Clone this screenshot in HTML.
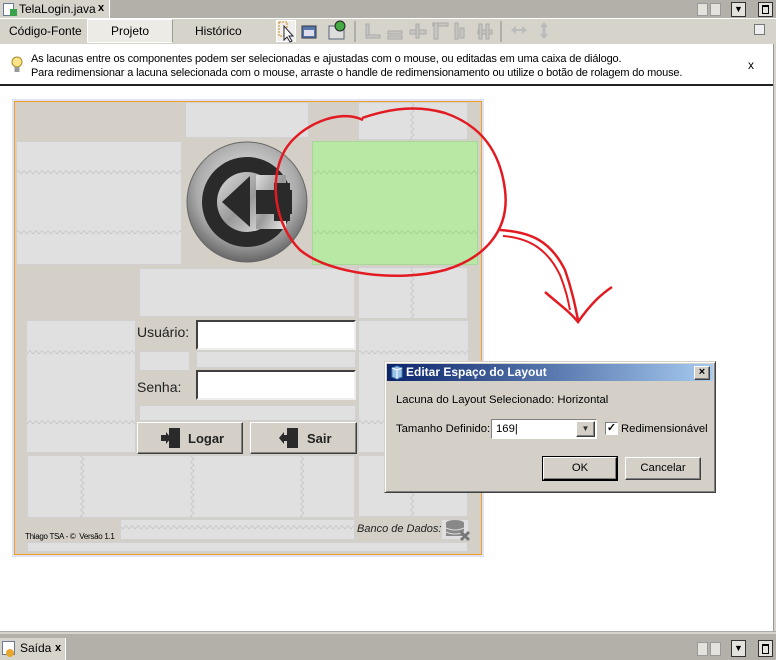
<!DOCTYPE html>
<html><head><meta charset="utf-8"><style>
*{margin:0;padding:0;box-sizing:border-box}
body{width:776px;height:660px;position:relative;overflow:hidden;background:#fff;font-family:"Liberation Sans",sans-serif;font-size:11px;color:#000}
.a{position:absolute}
.g{position:absolute;background:#e0e0e0;border:1px solid #d0d0d0}
.btn{position:absolute;background:#d4d0c8;border:1px solid;border-color:#fff #404040 #404040 #fff;box-shadow:inset -1px -1px 0 #808080}
.d{font-family:"Liberation Sans",sans-serif;font-size:11.3px}
</style></head><body>
<div class="a" style="left:0;top:0;width:776px;height:18px;background:#b3b0a9"></div>
<div class="a" style="left:0;top:0;width:110px;height:18px;background:#d6d3cb;border-right:1px solid #fff"></div>
<div class="a" style="left:3px;top:3px;width:11px;height:13px;background:#fff;border:1px solid #6a7a95"></div>
<div class="a" style="left:10px;top:9px;width:7px;height:7px;background:#3aa14b"></div>
<div class="a" style="left:19px;top:2px;font-size:12px">TelaLogin.java</div>
<div class="a" style="left:98px;top:2px;font-size:11px;font-weight:bold">x</div>
<div class="a" style="left:697px;top:3px;width:11px;height:13px;background:#e4e2dc;border:1px solid #999"></div>
<div class="a" style="left:710px;top:3px;width:11px;height:13px;background:#e4e2dc;border:1px solid #999"></div>
<div class="a" style="left:731px;top:2px;width:15px;height:15px;background:#e4e2dc;border:1px solid #333;font-size:9px;text-align:center;line-height:13px">▼</div>
<div class="a" style="left:758px;top:2px;width:15px;height:15px;background:#e4e2dc;border:1px solid #333"><div class="a" style="left:3px;top:2px;width:7px;height:9px;border:1px solid #000;border-top-width:2px"></div></div>
<div class="a" style="left:0;top:18px;width:776px;height:26px;background:#d6d3cb;border-top:1px solid #fff"></div>
<div class="a" style="left:9px;top:24px;font-size:12px">Código-Fonte</div>
<div class="a" style="left:87px;top:19px;width:86px;height:24px;background:#ecebe6;border:1px solid #fff;border-right-color:#999"></div>
<div class="a" style="left:111px;top:24px;font-size:12px">Projeto</div>
<div class="a" style="left:195px;top:24px;font-size:12px">Histórico</div>
<div class="a" style="left:276px;top:20px;width:20px;height:22px;background:#f0efec;border:1px solid #fff"></div>
<svg class="a" style="left:270px;top:18px" width="290" height="26">
<rect x="9" y="4" width="8" height="14" fill="none" stroke="#c88a1a" stroke-dasharray="2 1"/>
<path d="M14 8 L14 22 L17 19 L20 24 L22 23 L19 18 L23 18 Z" fill="#fff" stroke="#223"/>
<rect x="32" y="8" width="14" height="12" fill="#5577aa" stroke="#334"/><rect x="34" y="12" width="10" height="6" fill="#dde"/>
<rect x="59" y="8" width="15" height="13" fill="#ddd" stroke="#567"/><circle cx="70" cy="8" r="5" fill="#4a4" stroke="#222"/>
<line x1="85" y1="3" x2="85" y2="24" stroke="#888"/>
<g fill="#c8c6c0" stroke="#aaa"><rect x="96" y="6" width="3" height="14"/><rect x="96" y="17" width="14" height="3"/><rect x="118" y="13" width="14" height="3"/><rect x="118" y="18" width="14" height="3"/><rect x="140" y="12" width="16" height="4"/><rect x="146" y="6" width="3" height="14"/><rect x="163" y="5" width="15" height="3"/><rect x="164" y="5" width="4" height="16"/><rect x="185" y="5" width="3" height="16"/><rect x="190" y="10" width="4" height="10"/><rect x="208" y="12" width="14" height="4"/><rect x="209" y="6" width="3" height="15"/><rect x="216" y="6" width="3" height="15"/></g>
<line x1="231" y1="3" x2="231" y2="24" stroke="#888"/>
<path d="M241 12 L246 8 L246 11 L252 11 L252 8 L257 12 L252 16 L252 13 L246 13 L246 16 Z" fill="#bbb"/>
<path d="M274 4 L278 9 L275.5 9 L275.5 16 L278 16 L274 21 L270 16 L272.5 16 L272.5 9 L270 9 Z" fill="#bbb"/>
</svg>
<div class="a" style="left:754px;top:24px;width:11px;height:11px;border:1px solid #777;background:#eee"></div>
<div class="a" style="left:0;top:44px;width:776px;height:42px;background:#fff;border-bottom:2px solid #222"></div>
<svg class="a" style="left:10px;top:55px" width="14" height="20"><circle cx="7" cy="7" r="5" fill="#ffe38a" stroke="#a88a2a"/><rect x="4.5" y="12" width="5" height="5" fill="#999"/></svg>
<div class="a" style="left:31px;top:52px;font-size:11px;line-height:14px;letter-spacing:-0.15px;white-space:nowrap">As lacunas entre os componentes podem ser selecionadas e ajustadas com o mouse, ou editadas em uma caixa de diálogo.<br>Para redimensionar a lacuna selecionada com o mouse, arraste o handle de redimensionamento ou utilize o botão de rolagem do mouse.</div>
<div class="a" style="left:748px;top:58px;font-size:12px">x</div>
<div class="a" style="left:773px;top:44px;width:3px;height:590px;background:#d6d3cb;border-left:1px solid #999"></div>
<div class="a" style="left:12px;top:99px;width:472px;height:458px;border:2px solid #e1e1f7"></div>
<div class="a" style="left:14px;top:101px;width:468px;height:454px;border:1px solid #f0a020;background:#d4d0c8"></div>
<div class="g" style="left:185px;top:102px;width:124px;height:36px"></div>
<div class="g" style="left:358px;top:102px;width:110px;height:38px"></div>
<div class="g" style="left:16px;top:141px;width:166px;height:124px"></div>
<div class="a" style="left:312px;top:141px;width:166px;height:124px;background:#b8e8a4;border:1px solid #a8d898"></div>
<div class="g" style="left:358px;top:267px;width:110px;height:52px"></div>
<div class="g" style="left:139px;top:268px;width:216px;height:49px"></div>
<div class="g" style="left:26px;top:320px;width:110px;height:133px"></div>
<div class="g" style="left:358px;top:320px;width:111px;height:133px"></div>
<div class="g" style="left:139px;top:351px;width:51px;height:20px"></div>
<div class="g" style="left:196px;top:351px;width:160px;height:17px"></div>
<div class="g" style="left:139px;top:405px;width:217px;height:16px"></div>
<div class="g" style="left:27px;top:455px;width:328px;height:63px"></div>
<div class="g" style="left:358px;top:455px;width:110px;height:62px"></div>
<div class="g" style="left:120px;top:519px;width:235px;height:21px"></div>
<div class="g" style="left:27px;top:542px;width:441px;height:10px"></div>
<div class="g" style="left:441px;top:519px;width:28px;height:21px"></div>
<svg class="a" style="left:186px;top:141px" width="122" height="122">
<defs><radialGradient id="m" cx="50%" cy="40%" r="60%"><stop offset="0" stop-color="#f4f4f4"/><stop offset=".7" stop-color="#aaa"/><stop offset="1" stop-color="#666"/></radialGradient><linearGradient id="in" x1="0" y1="0" x2="1" y2="1"><stop offset="0" stop-color="#ddd"/><stop offset=".5" stop-color="#999"/><stop offset="1" stop-color="#eee"/></linearGradient></defs>
<circle cx="61" cy="61" r="60" fill="url(#m)" stroke="#666"/>
<circle cx="61" cy="61" r="45" fill="#2a2a2a"/>
<circle cx="61" cy="61" r="30" fill="url(#in)"/>
<rect x="70" y="34" width="30" height="54" fill="url(#in)"/>
<rect x="70" y="49" width="36" height="24" fill="#2a2a2a"/>
<path d="M36 61 L64 35 L64 86 Z" fill="#2a2a2a"/>
<rect x="88" y="42" width="16" height="7" fill="#2a2a2a"/><rect x="88" y="73" width="16" height="7" fill="#2a2a2a"/>
</svg>
<div class="a" style="left:137px;top:324px;font-size:14px;color:#222">Usuário:</div>
<div class="a" style="left:196px;top:320px;width:160px;height:30px;background:#fff;border:2px solid;border-color:#404040 #eee #eee #404040"></div>
<div class="a" style="left:137px;top:379px;font-size:14px;color:#222">Senha:</div>
<div class="a" style="left:196px;top:370px;width:160px;height:30px;background:#fff;border:2px solid;border-color:#404040 #eee #eee #404040"></div>
<div class="btn" style="left:137px;top:422px;width:106px;height:32px"></div>
<div class="btn" style="left:250px;top:422px;width:107px;height:32px"></div>
<svg class="a" style="left:161px;top:426px" width="22" height="24"><rect x="8" y="2" width="11" height="20" fill="#2a2a2a"/><path d="M0 9 L5 9 L5 6 L10 12 L5 18 L5 15 L0 15Z" fill="#2a2a2a"/></svg>
<div class="a" style="left:188px;top:431px;font-size:13px;font-weight:bold;color:#222">Logar</div>
<svg class="a" style="left:279px;top:426px" width="22" height="24"><rect x="8" y="2" width="11" height="20" fill="#2a2a2a"/><path d="M10 9 L5 9 L5 6 L0 12 L5 18 L5 15 L10 15Z" fill="#2a2a2a"/></svg>
<div class="a" style="left:307px;top:431px;font-size:13px;font-weight:bold;color:#222">Sair</div>
<div class="a" style="left:25px;top:532px;font-size:8px;letter-spacing:-0.3px">Thiago TSA - © &nbsp;Versão 1.1</div>
<div class="a" style="left:357px;top:523px;font-size:11px;font-style:italic;color:#222">Banco de Dados:</div>
<svg class="a" style="left:444px;top:518px" width="28" height="24"><ellipse cx="11" cy="5" rx="9" ry="3" fill="#888"/><rect x="2" y="5" width="18" height="13" fill="#888"/><path d="M2 10 Q11 14 20 10 M2 14 Q11 18 20 14" stroke="#ddd" fill="none"/><path d="M17 14 L25 22 M25 14 L17 22" stroke="#777" stroke-width="3"/></svg>
<svg class="a" style="left:0;top:0" width="776" height="660">
<defs>
<pattern id="h" width="6" height="5" patternUnits="userSpaceOnUse"><path d="M0 0.5 L3 4 L6 0.5" fill="none" stroke="#c0c0c0" stroke-width="0.7"/></pattern>
<pattern id="v" width="5" height="6" patternUnits="userSpaceOnUse"><path d="M0.5 0 L4 3 L0.5 6" fill="none" stroke="#c0c0c0" stroke-width="0.7"/></pattern>
<pattern id="hg" width="6" height="5" patternUnits="userSpaceOnUse"><path d="M0 0.5 L3 4 L6 0.5" fill="none" stroke="#a0cc90" stroke-width="0.7"/></pattern>
</defs>
<rect x="17" y="170" width="164" height="5" fill="url(#h)"/>
<rect x="17" y="230" width="164" height="5" fill="url(#h)"/>
<rect x="313" y="170" width="164" height="5" fill="url(#hg)"/>
<rect x="313" y="230" width="164" height="5" fill="url(#hg)"/>
<rect x="27" y="350" width="108" height="5" fill="url(#h)"/>
<rect x="27" y="420" width="108" height="5" fill="url(#h)"/>
<rect x="359" y="350" width="109" height="5" fill="url(#h)"/>
<rect x="359" y="420" width="109" height="5" fill="url(#h)"/>
<rect x="121" y="525" width="233" height="5" fill="url(#h)"/>
<rect x="410" y="103" width="5" height="36" fill="url(#v)"/>
<rect x="410" y="268" width="5" height="50" fill="url(#v)"/>
<rect x="410" y="456" width="5" height="60" fill="url(#v)"/>
<rect x="80" y="456" width="5" height="61" fill="url(#v)"/>
<rect x="190" y="456" width="5" height="61" fill="url(#v)"/>
<rect x="300" y="456" width="5" height="61" fill="url(#v)"/>
<path d="M363 120 C340 108 300 125 285 150 C268 180 275 225 300 250 C330 275 400 282 445 270 C485 258 510 230 505 190 C500 150 480 125 445 113 C410 103 380 112 362 118" fill="none" stroke="#e21b22" stroke-width="2.5"/>
<path d="M500 230 C530 232 550 240 565 270 C572 290 575 305 578 320 M545 292 C560 305 570 312 578 322 C590 305 600 295 612 287" fill="none" stroke="#e21b22" stroke-width="2.5"/>
<path d="M503 236 C530 238 548 250 560 275 C566 290 568 300 570 310" fill="none" stroke="#e21b22" stroke-width="2"/>
</svg>
<div class="a" style="left:384px;top:361px;width:332px;height:132px;background:#d4d0c8;border:1px solid;border-color:#d4d0c8 #404040 #404040 #d4d0c8;box-shadow:inset 1px 1px 0 #fff,inset -1px -1px 0 #808080"></div>
<div class="a" style="left:387px;top:364px;width:326px;height:17px;background:linear-gradient(90deg,#0a246a,#a6caf0)"></div>
<svg class="a" style="left:390px;top:365px" width="14" height="15"><path d="M2 3 L7 1 L12 3 L12 12 L7 14 L2 12Z" fill="#9cc4e8" stroke="#4a7ab0"/><path d="M2 3 L7 5 L12 3 M7 5 L7 14" stroke="#fff" fill="none"/></svg>
<div class="a" style="left:406px;top:365px;color:#fff;font-weight:bold;font-size:12px">Editar Espaço do Layout</div>
<div class="btn" style="left:694px;top:366px;width:16px;height:14px;font-size:11px;line-height:11px;text-align:center;font-weight:bold">×</div>
<div class="a d" style="left:396px;top:394px">Lacuna do Layout Selecionado: Horizontal</div>
<div class="a d" style="left:396px;top:423px">Tamanho Definido:</div>
<div class="a" style="left:491px;top:419px;width:106px;height:20px;background:#fff;border:1px solid;border-color:#808080 #fff #fff #808080"></div>
<div class="a d" style="left:496px;top:423px">169|</div>
<div class="btn" style="left:576px;top:421px;width:19px;height:16px;font-size:8px;text-align:center;line-height:14px;color:#333">▼</div>
<div class="a" style="left:605px;top:422px;width:13px;height:13px;background:#fff;border:1px solid;border-color:#808080 #fff #fff #808080;font-size:11px;line-height:11px;text-align:center;font-weight:bold">✓</div>
<div class="a d" style="left:621px;top:423px">Redimensionável</div>
<div class="btn d" style="left:543px;top:457px;width:74px;height:23px;border-color:#fff #000 #000 #fff;outline:1px solid #000;text-align:center;line-height:20px">OK</div>
<div class="btn d" style="left:625px;top:457px;width:76px;height:23px;text-align:center;line-height:20px">Cancelar</div>
<div class="a" style="left:0;top:631px;width:776px;height:3px;background:#d6d3cb;border-top:1px solid #aaa"></div>
<div class="a" style="left:0;top:634px;width:776px;height:26px;background:#b3b0a9"></div>
<div class="a" style="left:0;top:638px;width:66px;height:22px;background:#d6d3cb;border-right:1px solid #fff"></div>
<div class="a" style="left:2px;top:641px;width:13px;height:14px;background:#fff;border:1px solid #6a7a95"></div>
<div class="a" style="left:6px;top:649px;width:8px;height:8px;border-radius:50%;background:#e8a830"></div>
<div class="a" style="left:20px;top:641px;font-size:12px">Saída</div>
<div class="a" style="left:55px;top:642px;font-size:11px;font-weight:bold">x</div>
<div class="a" style="left:697px;top:642px;width:11px;height:14px;background:#e4e2dc;border:1px solid #999"></div>
<div class="a" style="left:710px;top:642px;width:11px;height:14px;background:#e4e2dc;border:1px solid #999"></div>
<div class="a" style="left:731px;top:640px;width:15px;height:17px;background:#e4e2dc;border:1px solid #333;font-size:9px;text-align:center;line-height:15px">▼</div>
<div class="a" style="left:758px;top:640px;width:15px;height:17px;background:#e4e2dc;border:1px solid #333"><div class="a" style="left:3px;top:3px;width:7px;height:10px;border:1px solid #000;border-top-width:2px"></div></div>
</body></html>
